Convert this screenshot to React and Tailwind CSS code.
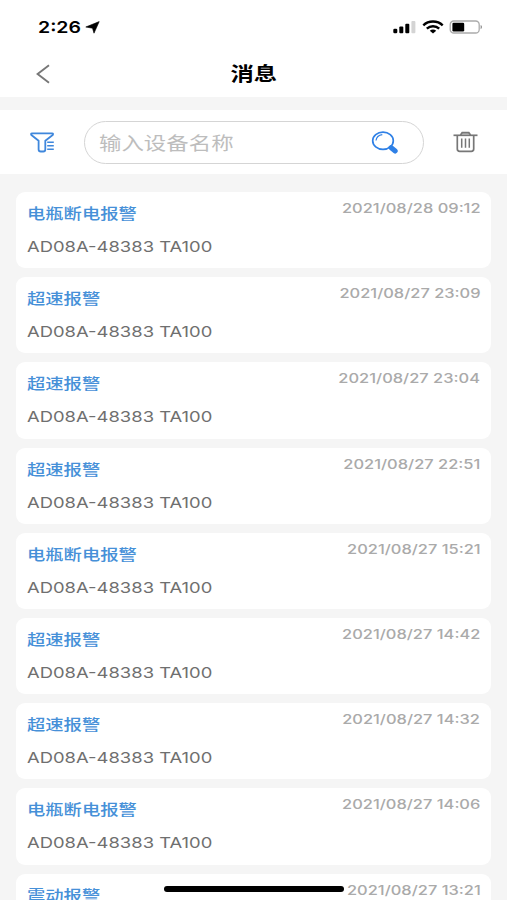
const messages = [
  { title: "电瓶断电报警", time: "2021/08/28 09:12" },
  { title: "超速报警", time: "2021/08/27 23:09" },
  { title: "超速报警", time: "2021/08/27 23:04" },
  { title: "超速报警", time: "2021/08/27 22:51" },
  { title: "电瓶断电报警", time: "2021/08/27 15:21" },
  { title: "超速报警", time: "2021/08/27 14:42" },
  { title: "超速报警", time: "2021/08/27 14:32" },
  { title: "电瓶断电报警", time: "2021/08/27 14:06" },
  { title: "震动报警", time: "2021/08/27 13:21" },
];

function StatusBar() {
  return (
    <div className="h-[54px] pl-[38px] pr-6 flex items-center justify-between text-black">
      <div className="flex items-center">
        <span className="w-[47px] pt-px text-[16.5px] leading-none font-semibold whitespace-nowrap origin-left scale-x-[1.18]">
          2:26
        </span>
        <svg className="w-[15px] h-[13px]" viewBox="0 0 15 13" fill="currentColor" stroke="currentColor" strokeWidth=".6" strokeLinejoin="round">
          <path d="M14.200 .6 9 12.200 7.500 7.200 .8 6Z" />
        </svg>
      </div>

      <div className="flex items-center">
        <svg className="w-[23px] h-[14px]" viewBox="0 0 23 14">
          <rect x="0.3" y="8.8" width="4" height="4.4" rx="1.3" />
          <rect x="6.3" y="6.6" width="4" height="6.6" rx="1" />
          <rect x="12.3" y="3.8" width="4" height="9.4" rx="1" />
          <rect x="18.4" y="1" width="4" height="12.2" rx="1" fill="#d4d4d4" />
        </svg>
        <svg className="ml-[6px] w-[22px] h-[14px]" viewBox="0 0 22 14" fill="none" stroke="currentColor" strokeWidth="2.4">
          <path d="M1.3 5.3C6.6.2 15.4.2 20.7 5.3" />
          <path d="M4.8 8.6C8.3 5.4 13.7 5.4 17.2 8.6" />
          <path d="M7.8 10.7C9.6 9.2 12.4 9.2 14.2 10.7L11 13.5Z" fill="currentColor" stroke="none" />
        </svg>
        <svg className="ml-[5px] w-[34px] h-[14px]" viewBox="0 0 34 14">
          <rect x="1.2" y="1" width="29" height="12" rx="3.6" fill="none" stroke="#ababab" strokeWidth="1.3" />
          <rect x="3.4" y="2.7" width="11.8" height="8.8" rx="1.2" />
          <path d="M31.6 5v4.200c1.900-.7 1.900-3.500 0-4.200Z" fill="#8e8e8e" />
        </svg>
      </div>
    </div>
  );
}

function NavBar() {
  return (
    <div className="relative h-[43px] flex items-start justify-center">
      <button className="absolute left-[36px] top-[10px]">
        <svg className="w-[14px] h-5" viewBox="0 0 14 20" fill="none" stroke="#777" strokeWidth="1.9">
          <path d="M13 1.300 1.600 10 13 18.700" />
        </svg>
      </button>
      <h1 className="mt-[11px] ml-px text-[18.8px] leading-5 font-semibold text-black scale-x-[1.24]">消息</h1>
    </div>
  );
}

function SearchBar() {
  return (
    <div className="mt-[13px] h-[64px] bg-white pl-[30px] pr-[29px] flex items-center">
      {/* Filter */}
      <svg className="w-[25px] h-[21px]" viewBox="0 0 25 21" fill="none" stroke="#3f87dc" strokeWidth="1.8" strokeLinejoin="round">
        <path d="M2 1.300H22.200Q23.600 1.300 22.700 3L15.300 8.800V17.500Q15.300 19.500 13.300 19.500H10.800Q8.600 19.500 8.600 17.500V8.800L1.400 3Q.5 1.300 2 1.300Z" />
        <path d="M17.200 10.200h6.600M17.200 13.700h6.600M17.200 17.200h6.600" strokeWidth="1.6" />
      </svg>

      <div className="ml-[28.5px] w-[340px] h-[43px] rounded-full border-[1.5px] border-[#d5d5d5] pl-[14.5px] pr-[23.5px] flex items-center justify-between">
        <span className="pt-[2px] text-[18.4px] leading-none text-[#bdbdbd] whitespace-nowrap origin-left scale-x-[1.22]">
          输入设备名称
        </span>
        <svg className="w-[28px] h-[23px]" viewBox="0 0 28 23" fill="none" stroke="#2f80e6">
          <ellipse cx="12" cy="9.800" rx="10.300" ry="8.600" strokeWidth="1.700" />
          <path d="M5 9.500C5.400 6.300 8 4 11.300 3.600" strokeWidth="1.200" />
          <path d="M17.700 15.700 20 17" strokeWidth="2" />
          <path d="M20.200 16.700 24.200 20" strokeWidth="5" strokeLinecap="round" />
        </svg>
      </div>

      {/* Delete all */}
      <svg className="ml-auto w-[25px] h-[22px]" viewBox="0 0 25 22" fill="none" stroke="#777" strokeWidth="1.700">
        <path d="M.5 4.300H24.500" />
        <path d="M7.500 4 9.200 1.500H15.800L17.500 4" fill="#aaa" />
        <path d="M4.300 4.300V18Q4.300 20.300 6.700 20.300H18.300Q20.700 20.300 20.700 18V4.300" />
        <path d="M8.700 7.500v9.300M12.500 7.500v9.300M16.300 7.500v9.300" strokeWidth="1.500" />
      </svg>
    </div>
  );
}

function MessageCard({ title, time }) {
  return (
    <li className="h-[76.2px] shrink-0 rounded-[9px] bg-white px-[11px]">
      <div className="flex items-start justify-between">
        <h2 className="mt-[12px] text-[15px] leading-5 font-medium text-[#4690d8] whitespace-nowrap origin-left scale-x-[1.22]">
          {title}
        </h2>
        <time className="mt-[8px] text-[13px] leading-4 font-medium text-[#aaa] whitespace-nowrap origin-right scale-x-[1.265]">
          {time}
        </time>
      </div>
      <p className="mt-[13px] w-fit text-[15px] leading-5 text-[#6f6f6f] whitespace-nowrap origin-left scale-x-[1.228]">
        AD08A-48383 TA100
      </p>
    </li>
  );
}

export default function App() {
  return (
    <div className="relative h-[900px] w-[507px] overflow-hidden bg-[#f5f5f5] font-['Inter','Noto_Sans_CJK_SC',sans-serif]">
      <header className="bg-white">
        <StatusBar />
        <NavBar />
      </header>

      <SearchBar />

      <ul className="mt-[18px] pl-[16.3px] pr-[15.7px] flex flex-col gap-[9px]">
        {messages.map((message) => (
          <MessageCard key={message.time} title={message.title} time={message.time} />
        ))}
      </ul>

      {/* Home indicator */}
      <div className="absolute bottom-[8px] left-[164px] h-[6px] w-[180px] rounded-full bg-black" />
    </div>
  );
}
